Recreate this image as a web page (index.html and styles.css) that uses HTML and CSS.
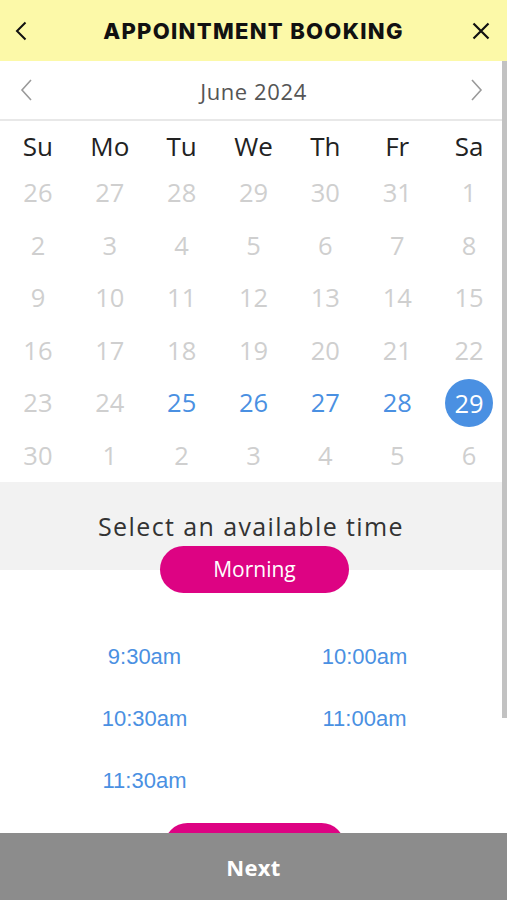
FILE: index.html
```html
<!DOCTYPE html>
<html lang="en">
<head>
<meta charset="utf-8">
<title>Appointment Booking</title>
<link rel="stylesheet" href="styles.css">
</head>
<body>
<div class="app">
  <header class="topbar">
    <span class="icon-btn">
      <svg width="12" height="20" viewBox="0 0 12 20"><path d="M10.5 1.5 L2 10 L10.5 18.5" fill="none" stroke="#111" stroke-width="2"/></svg>
    </span>
    <h1 class="title">APPOINTMENT BOOKING</h1>
    <span class="icon-btn">
      <svg width="18" height="18" viewBox="0 0 18 18"><path d="M1.5 1.5 L16.5 16.5 M16.5 1.5 L1.5 16.5" fill="none" stroke="#111" stroke-width="2.2"/></svg>
    </span>
  </header>

  <div class="month-nav">
    <svg class="chev" width="13" height="22" viewBox="0 0 13 22"><path d="M11 1 L2 11 L11 21" fill="none" stroke="#9a9a9a" stroke-width="1.6"/></svg>
    <span class="month">June 2024</span>
    <svg class="chev" width="13" height="22" viewBox="0 0 13 22"><path d="M2 1 L11 11 L2 21" fill="none" stroke="#9a9a9a" stroke-width="1.6"/></svg>
  </div>

  <div class="weekdays">
    <span>Su</span><span>Mo</span><span>Tu</span><span>We</span><span>Th</span><span>Fr</span><span>Sa</span>
  </div>
  <div class="days">
    <span>26</span><span>27</span><span>28</span><span>29</span><span>30</span><span>31</span><span>1</span>
    <span>2</span><span>3</span><span>4</span><span>5</span><span>6</span><span>7</span><span>8</span>
    <span>9</span><span>10</span><span>11</span><span>12</span><span>13</span><span>14</span><span>15</span>
    <span>16</span><span>17</span><span>18</span><span>19</span><span>20</span><span>21</span><span>22</span>
    <span>23</span><span>24</span><span class="avail">25</span><span class="avail">26</span><span class="avail">27</span><span class="avail">28</span><span class="selected"><b>29</b></span>
    <span>30</span><span>1</span><span>2</span><span>3</span><span>4</span><span>5</span><span>6</span>
  </div>

  <section class="time-head">
    <h2 class="time-title">Select an available time</h2>
  </section>
  <div class="tabs">
    <span class="pill">Morning</span>
  </div>

  <div class="slots">
    <span>9:30am</span><span>10:00am</span>
    <span>10:30am</span><span>11:00am</span>
    <span>11:30am</span>
  </div>
  <div class="tabs lower">
    <span class="pill"></span>
  </div>
</div>

<div class="scrollbar"></div>

<footer class="footer">
  <span class="next">Next</span>
</footer>
</body>
</html>
```
FILE: styles.css
```css
* { box-sizing: border-box; }
html, body { margin: 0; padding: 0; }
body {
  background: #fff;
  font-family: "Open Sans", "DejaVu Sans", sans-serif;
  width: 507px;
  height: 900px;
  overflow: hidden;
}
.app { width: 507px; }

.topbar {
  height: 61px;
  background: #fcf9a8;
  display: flex;
  align-items: center;
  justify-content: space-between;
  padding: 0 17px 0 15px;
}
.icon-btn { display: flex; align-items: center; height: 20px; }
.title {
  margin: 0;
  font-family: "Inter", "Liberation Sans", sans-serif;
  font-weight: 800;
  font-size: 22px;
  letter-spacing: 1.3px;
  color: #111;
  padding-left: 8px;
}

.month-nav {
  width: 502px;
  height: 60px;
  display: flex;
  align-items: center;
  justify-content: space-between;
  padding: 0 19px 0 20px;
  border-bottom: 2px solid #e8e8e8;
}
.month {
  font-size: 22px;
  letter-spacing: 0.6px;
  color: #555;
  padding-top: 1px;
  padding-left: 4px;
}

.weekdays, .days {
  display: grid;
  grid-template-columns: repeat(7, 1fr);
  text-align: center;
  padding: 0 2px;
}
.weekdays {
  padding-top: 5px;
  height: 45px;
  line-height: 40px;
  font-size: 26px;
  color: #222;
}
.days span {
  height: 52.6px;
  line-height: 52.6px;
  font-size: 25.5px;
  color: #cfcfcf;
  display: flex;
  align-items: center;
  justify-content: center;
}
.days span.avail { color: #4a90e2; }
.days span.selected b {
  font-weight: 400;
  width: 48px;
  height: 48px;
  border-radius: 50%;
  background: #4a90e2;
  color: #fff;
  line-height: 48px;
  text-align: center;
}

.time-head {
  width: 502px;
  height: 88px;
  background: #f2f2f2;
  display: flex;
  align-items: center;
  justify-content: center;
}
.time-title {
  margin: 0;
  font-weight: 400;
  font-size: 25px;
  letter-spacing: 1.4px;
  color: #333;
}

.tabs {
  width: 502px;
  display: flex;
  justify-content: center;
  margin-top: -24px;
  padding-left: 7px;
}
.pill {
  width: 189px;
  height: 47px;
  border-radius: 24px;
  background: #dd0383;
  color: #fff;
  font-size: 21px;
  display: flex;
  align-items: center;
  justify-content: center;
}
.tabs.lower { margin-top: 11px; }
.tabs.lower .pill { width: 181px; }

.slots {
  width: 502px;
  display: grid;
  grid-template-columns: 220px 220px;
  justify-content: center;
  padding-left: 7px;
  margin-top: 33px;
  font-family: "Liberation Sans", Arial, sans-serif;
  font-size: 22px;
  color: #4a90e2;
  text-align: center;
}
.slots span { height: 62px; line-height: 62px; }

.scrollbar {
  position: fixed;
  top: 61px;
  right: 0;
  width: 5px;
  height: 657px;
  background: #c2c2c2;
}

.footer {
  position: fixed;
  left: 0;
  bottom: 0;
  width: 507px;
  height: 67px;
  background: #8c8c8c;
  display: flex;
  align-items: center;
  justify-content: center;
}
.next {
  color: #fff;
  font-weight: 700;
  font-size: 22px;
  letter-spacing: 0.3px;
}
```
